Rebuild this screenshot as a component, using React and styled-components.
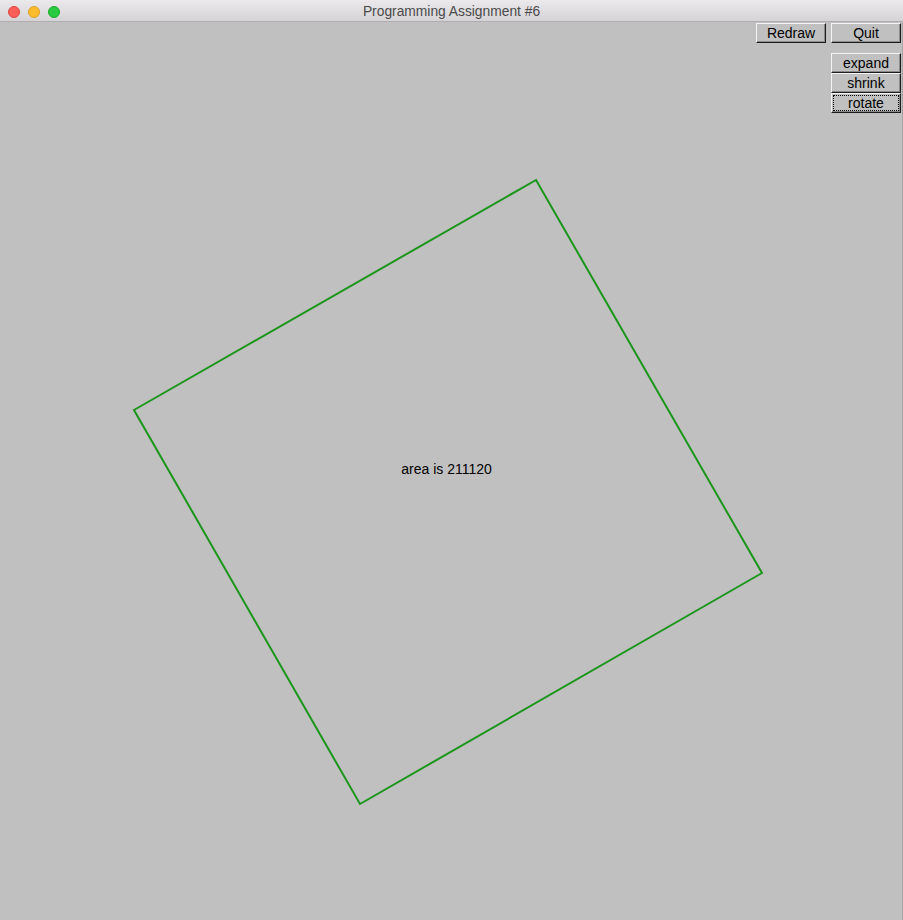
import React, { useState } from 'react';
import styled, { createGlobalStyle } from 'styled-components';

// Shape data (canvas coordinates, below the title bar)
const SQUARE = [
  [536, 158],
  [762, 551],
  [360, 782],
  [134, 388]
];

const LIGHTS = [
  { id: 'close', fill: '#fc5f57', edge: '#de4640' },
  { id: 'min', fill: '#fdbc2e', edge: '#dea123' },
  { id: 'max', fill: '#29c940', edge: '#1aab2b' }
];

const GlobalStyle = createGlobalStyle`
  html, body {
    margin: 0;
    padding: 0;
    background: #c0c0c0;
  }
  #root {
    width: 903px;
    height: 920px;
  }
`;

const Window = styled.div`
  width: 903px;
  height: 920px;
  display: flex;
  flex-direction: column;
  background: #c0c0c0;
  font-family: 'Liberation Sans', Arial, sans-serif;
  overflow: hidden;
`;

const TitleBar = styled.div`
  height: 21px;
  flex: none;
  display: flex;
  align-items: center;
  position: relative;
  background: linear-gradient(#ebe9eb, #d5d3d5);
  border-bottom: 1px solid #afadaf;
`;

const Lights = styled.div`
  display: flex;
  gap: 8px;
  padding-left: 8px;
  padding-top: 2px;
`;

const Light = styled.span`
  width: 12px;
  height: 12px;
  box-sizing: border-box;
  border-radius: 50%;
  background: ${p => p.$fill};
  border: 0.5px solid ${p => p.$edge};
`;

const Title = styled.div`
  position: absolute;
  left: 0;
  right: 0;
  top: 4px;
  text-align: center;
  font-size: 13.8px;
  line-height: 16px;
  color: #4a4a4a;
  pointer-events: none;
`;

const Content = styled.div`
  flex: 1;
  position: relative;
  border-right: 1px solid #a6a6a6;
`;

const Drawing = styled.svg`
  position: absolute;
  inset: 0;
  width: 100%;
  height: 100%;
`;

const Controls = styled.div`
  position: relative;
  display: flex;
  flex-direction: column;
  align-items: flex-end;
  padding: 1px 1px 0 0;
`;

const TopRow = styled.div`
  display: flex;
  gap: 5px;
`;

const Stack = styled.div`
  display: flex;
  flex-direction: column;
  margin-top: 10px;
`;

const Button = styled.button`
  width: 70px;
  height: 20px;
  box-sizing: border-box;
  padding: 0;
  margin: 0;
  font-family: 'Liberation Sans', Arial, sans-serif;
  font-size: 14px;
  line-height: 16px;
  color: #000;
  background: #c0c0c0;
  border-style: solid;
  border-width: 1px;
  border-color: #f4f4f4 #1c1c1c #1c1c1c #f4f4f4;
  box-shadow: inset -1px -1px 0 #8a8a8a;
  outline: ${p => (p.$focused ? '1px dotted #000' : 'none')};
  outline-offset: -3px;
  cursor: default;
`;

const App = () => {
  const [focused, setFocused] = useState('rotate');
  const area = 211120;

  return (
    <>
      <GlobalStyle />
      <Window>
        <TitleBar>
          <Lights>
            {LIGHTS.map(l => (
              <Light key={l.id} $fill={l.fill} $edge={l.edge} />
            ))}
          </Lights>
          <Title>Programming Assignment #6</Title>
        </TitleBar>

        <Content>
          <Drawing viewBox="0 0 902 898" preserveAspectRatio="xMinYMin meet">
            <polygon
              points={SQUARE.map(p => p.join(',')).join(' ')}
              fill="none"
              stroke="#1b961b"
              strokeWidth="2"
              strokeLinejoin="miter"
            />
            <text
              x="446.5"
              y="452"
              textAnchor="middle"
              fontFamily="'Liberation Sans', Arial, sans-serif"
              fontSize="14"
              fill="#000"
            >
              area is {area}
            </text>
          </Drawing>

          <Controls>
            <TopRow>
              <Button $focused={focused === 'redraw'} onClick={() => setFocused('redraw')}>Redraw</Button>
              <Button $focused={focused === 'quit'} onClick={() => setFocused('quit')}>Quit</Button>
            </TopRow>
            <Stack>
              {['expand', 'shrink', 'rotate'].map(id => (
                <Button key={id} $focused={focused === id} onClick={() => setFocused(id)}>
                  {id}
                </Button>
              ))}
            </Stack>
          </Controls>
        </Content>
      </Window>
    </>
  );
};

export default App;
